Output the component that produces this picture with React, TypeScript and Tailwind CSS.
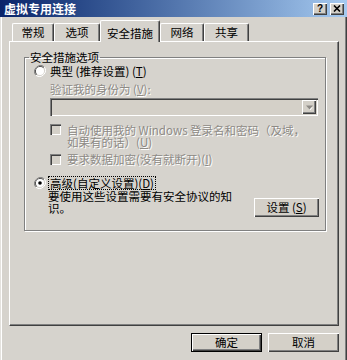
const raised =
  "bg-[#d4d0c8] shadow-[inset_1px_1px_0_#fff,inset_-1px_-1px_0_#404040,inset_-2px_-2px_0_#808080]";
const sunken =
  "shadow-[inset_1px_1px_0_#808080,inset_2px_2px_0_#404040,inset_-1px_-1px_0_#fff,inset_-2px_-2px_0_#d4d0c8]";
const disabled = "text-[#8d8a85] [text-shadow:1px_1px_0_#fff]";

function Radio({ checked }: { checked?: boolean }) {
  return (
    <svg width="12" height="12" viewBox="0 0 12 12" className="shrink-0">
      <path d="M10.2 1.8A6 6 0 0 0 1.8 10.2" fill="none" stroke="#808080" strokeWidth="1" />
      <path d="M9.5 2.5A5 5 0 0 0 2.5 9.5" fill="none" stroke="#404040" strokeWidth="1" />
      <path d="M10.2 1.8A6 6 0 0 1 1.8 10.2" fill="none" stroke="#fff" strokeWidth="1" />
      <circle cx="6" cy="6" r="4" fill="#fff" />
      {checked && <circle cx="6" cy="6" r="1.8" fill="#000" />}
    </svg>
  );
}

function Check() {
  return <div className={`w-[11px] h-[11px] shrink-0 bg-[#d4d0c8] ${sunken}`} />;
}

function Tab({ label, w, active }: { label: string; w: string; active?: boolean }) {
  if (active) {
    return (
      <div
        className={`${w} h-[22px] flex items-start pt-[4px] justify-center rounded-t-[2px] bg-[#d6d3cd] border-t border-l border-white border-r border-r-[#404040] shadow-[inset_-1px_0_0_#808080]`}
      >
        {label}
      </div>
    );
  }
  return (
    <div
      className={`${w} h-[18px] mb-[1px] flex items-center justify-center rounded-t-[2px] border-t border-l border-white border-r border-r-[#404040] shadow-[inset_-1px_0_0_#808080]`}
    >
      {label}
    </div>
  );
}

export default function App() {
  return (
    <div className="w-[347px] h-[360px] overflow-hidden flex flex-col bg-[#d6d3cd] text-black text-[11.5px] font-['Noto_Sans_CJK_SC','Noto_Sans',sans-serif]">
      <div className="h-[17px] shrink-0 flex items-center pl-[4px] pr-[3px] bg-linear-to-r from-[#0a246a] to-[#a6caf0]">
        <span className="text-white font-bold text-[12px] leading-[14px]">虚拟专用连接</span>
        <div className="ml-auto flex gap-[3px]">
          <div className={`w-[14px] h-[12px] flex items-center justify-center ${raised}`}>
            <span className="font-['Liberation_Sans',sans-serif] font-bold text-[10px] leading-[10px]">?</span>
          </div>
          <div className={`w-[14px] h-[12px] flex items-center justify-center ${raised}`}>
            <svg width="8" height="7" viewBox="0 0 8 7">
              <path d="M1 0.5L7 6.5M7 0.5L1 6.5" stroke="#000" strokeWidth="1.6" />
            </svg>
          </div>
        </div>
      </div>

      <div className="flex-1 flex flex-col px-[9px] pt-[3px] shadow-[inset_1px_0_0_#e4e2de,inset_2px_0_0_#fff,inset_-1px_0_0_#404040,inset_-2px_0_0_#808080]">
        <div className="relative z-10 h-[22px] -mb-[1px] flex items-end pl-[3px]">
          <Tab label="常规" w="w-[42px]" />
          <Tab label="选项" w="w-[46px]" />
          <Tab label="安全措施" w="w-[60px]" active />
          <Tab label="网络" w="w-[44px]" />
          <Tab label="共享" w="w-[45px]" />
        </div>

        <div className="h-[285px] w-[330px] border border-t-white border-l-white border-r-[#404040] border-b-[#404040] shadow-[inset_-1px_-1px_0_#808080] pl-[14px] pt-[9px]">
          <fieldset className="w-[302px] border border-[#808080] shadow-[1px_1px_0_#fff,inset_1px_1px_0_#fff] pb-[13px]">
            <legend className="ml-[4px] px-[1px] leading-[12px]">安全措施选项</legend>

            <div className="mt-[2px] ml-[9px] h-[12px] flex items-center gap-[4px] leading-[12px]">
              <Radio />
              <span>
                典型 (推荐设置) (<span className="underline">T</span>)
              </span>
            </div>

            <div className={`mt-[6px] ml-[25px] leading-[12px] ${disabled}`}>
              验证我的身份为 (<span className="underline">V</span>):
            </div>

            <div className={`mt-[3px] ml-[25px] w-[268px] h-[18px] flex items-center justify-end pr-[2px] bg-[#d4d0c8] ${sunken}`}>
              <div className={`w-[14px] h-[14px] flex items-center justify-center ${raised}`}>
                <svg width="7" height="5" viewBox="0 0 7 5">
                  <path d="M1 1.5L6 1.5L3.5 4.5Z" fill="#fff" transform="translate(0.8 0.8)" />
                  <path d="M0 0.5L7 0.5L3.5 4.5Z" fill="#8d8a85" />
                </svg>
              </div>
            </div>

            <div className={`mt-[8px] ml-[25px] flex items-start gap-[6px] leading-[12px] ${disabled}`}>
              <Check />
              <span className="w-[240px]">
                自动使用我的 Windows 登录名和密码（及域，如果有的话）(<span className="underline">U</span>)
              </span>
            </div>

            <div className={`mt-[5px] ml-[25px] h-[12px] flex items-center gap-[6px] leading-[12px] ${disabled}`}>
              <Check />
              <span>
                要求数据加密(没有就断开)(<span className="underline">I</span>)
              </span>
            </div>

            <div className="mt-[10px] ml-[9px] h-[15px] flex items-center gap-[2px]">
              <Radio checked />
              <span className="border border-dotted border-black px-[1px] leading-[12px]">
                高级(自定义设置)(<span className="underline">D</span>)
              </span>
            </div>

            <div className="ml-[23px] mr-[6px] flex items-start">
              <span className="w-[186px] leading-[12px]">要使用这些设置需要有安全协议的知识。</span>
              <div className={`ml-auto mt-[8px] w-[65px] h-[19px] flex items-center justify-center ${raised}`}>
                设置 (<span className="underline">S</span>)
              </div>
            </div>
          </fieldset>
        </div>

        <div className="mt-[7px] flex justify-end gap-[6px] -mr-px">
          <div className="w-[71px] h-[19px] flex items-center justify-center border border-black bg-[#d4d0c8] shadow-[inset_1px_1px_0_#fff,inset_-1px_-1px_0_#404040,inset_-2px_-2px_0_#808080]">
            确定
          </div>
          <div className={`w-[71px] h-[19px] flex items-center justify-center ${raised}`}>取消</div>
        </div>
      </div>
    </div>
  );
}
